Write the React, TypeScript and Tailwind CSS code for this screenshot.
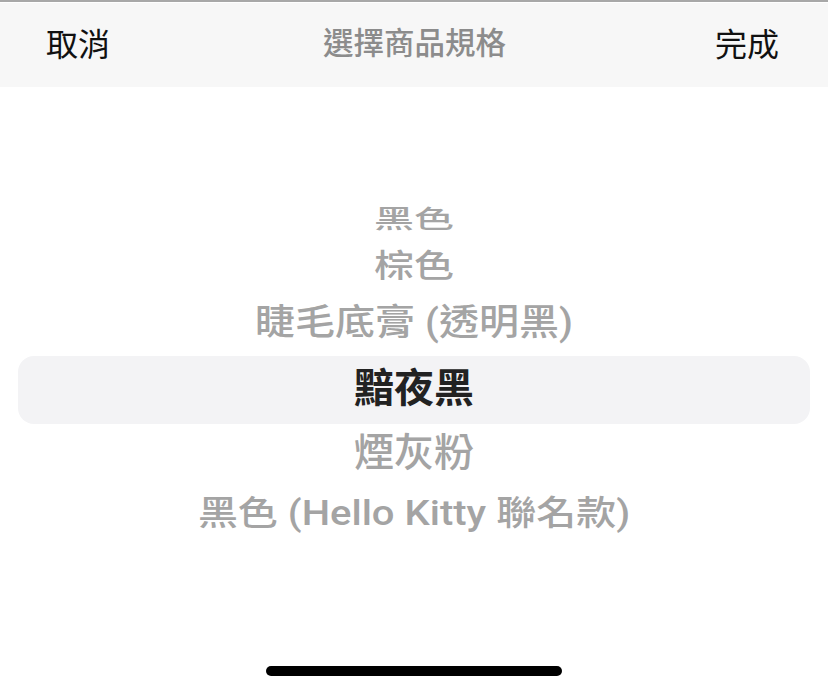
const options = [
  { label: '黑色', h: 'h-[48px] pt-[6px]', scale: 'scale-y-[0.62]' },
  { label: '棕色', h: 'h-[50px] pt-[2px]', scale: 'scale-y-[0.8]' },
  { label: '睫毛底膏 (透明黑)', h: 'h-[64px]', scale: 'scale-y-[0.92]' },
  { label: '黯夜黑', h: 'h-[68px]', scale: '', selected: true },
  { label: '煙灰粉', h: 'h-[62px]', scale: 'scale-y-[0.96]' },
  { label: '黑色 (Hello Kitty 聯名款)', h: 'h-[58px]', scale: 'scale-y-[0.86]' },
]

const font = "font-['Roboto','Noto_Sans_CJK_TC','Noto_Sans_CJK_SC',sans-serif]"

export default function App() {
  return (
    <div className={`flex h-[692px] w-[828px] flex-col overflow-hidden bg-white ${font}`}>
      <div className="h-[2px] bg-[#a8a8a8]" />
      <div className="h-px bg-white" />
      <header className="flex h-[84px] items-center justify-between bg-[#f7f7f7] px-[46px] pb-px">
        <button className="text-[32px] leading-none text-[#111]">取消</button>
        <h1 className="pl-[4px] text-[30.5px] font-medium leading-none text-[#8c8c8c]">選擇商品規格</h1>
        <button className="pr-[3px] text-[32px] leading-none text-[#111]">完成</button>
      </header>

      {/* wheel picker */}
      <div className="flex flex-1 flex-col pt-[107px]">
        {options.map((o) => (
          <div
            key={o.label}
            className={`flex items-center justify-center pb-[2px] ${o.h} ${
              o.selected ? 'mx-[18px] rounded-[16px] bg-[#f3f3f5]' : ''
            }`}
          >
            <span
              className={`whitespace-nowrap text-[40px] leading-none ${o.scale} ${
                o.selected ? 'font-bold text-[#222]' : 'font-medium text-[#a4a4a4]'
              }`}
            >
              {o.label}
            </span>
          </div>
        ))}
      </div>

      <div className="flex justify-center pb-[16px]">
        <div className="h-[10px] w-[296px] rounded-full bg-black" />
      </div>
    </div>
  )
}
